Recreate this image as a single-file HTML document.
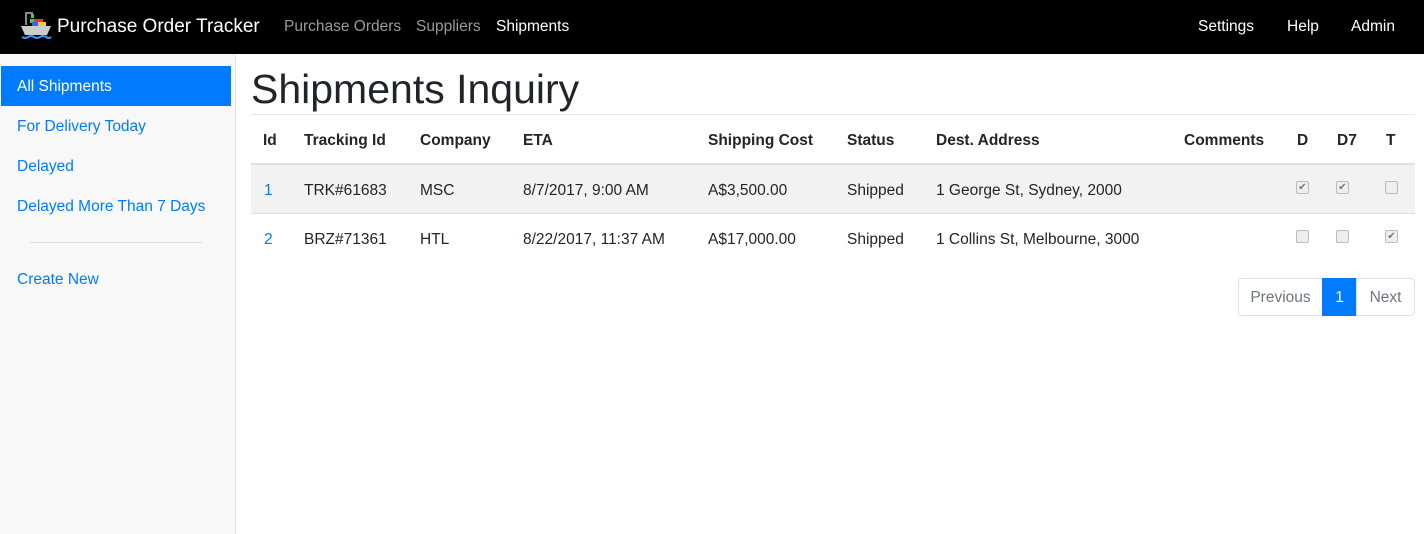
<!DOCTYPE html>
<html><head><meta charset="utf-8"><style>
*{box-sizing:border-box}
body{margin:0;font-family:"Liberation Sans",sans-serif;font-size:15.5px;color:#212529;background:#fff;width:1424px;height:534px;overflow:hidden;position:relative}
.nav{position:absolute;left:0;top:0;width:1424px;height:54px;background:#000;color:#fff}
.nav span{position:absolute;top:18px;font-size:15.5px}
.brand{left:57px;top:16px!important;font-size:19px!important}
.side{position:absolute;left:0;top:54px;width:236px;height:480px;background:#f8f8f8;border-right:1px solid #e5e5e5}
.side a{position:absolute;left:17px;color:#007bff;font-size:15.5px;text-decoration:none}
.active{position:absolute;left:1px;top:12px;width:230px;height:40px;background:#007bff}
h1{position:absolute;left:251px;top:65px;margin:0;font-size:41px;font-weight:500;line-height:48px}
.hr{position:absolute;left:251px;top:114px;width:1164px;height:1px;background:#e5e5e5}
.t{position:absolute;left:251px;width:1164px}
.t span{position:absolute;top:0}
.cb{position:absolute;width:13px;height:13px;border:1px solid #bbb;border-radius:2px;background:#eee;font-size:10px;line-height:11px;text-align:center;color:#777}
.pg{position:absolute;top:278px;height:38px;border:1px solid #dee2e6;color:#6c757d;line-height:38px;text-align:center}
</style></head><body>
<div class="nav">
<svg style="position:absolute;left:20px;top:11px" width="32" height="30" viewBox="0 0 32 30"><rect x="5" y="1" width="2" height="13" fill="#888"/><rect x="5" y="1" width="8" height="2" fill="#888"/><rect x="11" y="3" width="3" height="4" fill="#4c4"/><rect x="10" y="8" width="6" height="4" fill="#4c4"/><rect x="14" y="8" width="9" height="4" fill="#e33"/><rect x="12" y="11" width="6" height="4" fill="#36e"/><rect x="18" y="11" width="8" height="4" fill="#ec4"/><path d="M1 15h30l-4 9H5z" fill="#ccc"/><path d="M2 26q3 2 6 0t6 0t6 0t6 0t5 0" stroke="#39f" fill="none" stroke-width="2"/></svg>
<span class="brand">Purchase Order Tracker</span>
<span style="left:284px;color:#9a9a9a">Purchase Orders</span>
<span style="left:416px;color:#9a9a9a">Suppliers</span>
<span style="left:496px">Shipments</span>
<span style="left:1198px">Settings</span>
<span style="left:1287px">Help</span>
<span style="left:1351px">Admin</span>
</div>
<div class="side">
<div class="active"></div>
<a style="top:24px;color:#fff">All Shipments</a>
<a style="top:64px">For Delivery Today</a>
<a style="top:104px">Delayed</a>
<a style="top:144px">Delayed More Than 7 Days</a>
<div style="position:absolute;left:30px;top:188px;width:172px;height:1px;background:#ddd"></div>
<a style="top:217px">Create New</a>
</div>
<h1>Shipments Inquiry</h1>
<div class="hr"></div>
<div style="position:absolute;left:251px;top:163px;width:1164px;height:2px;background:#dee2e6"></div>
<div style="position:absolute;left:251px;top:165px;width:1164px;height:48px;background:#f2f2f2"></div>
<div style="position:absolute;left:251px;top:213px;width:1164px;height:1px;background:#dee2e6"></div>
<div class="t" style="top:132px;font-weight:bold">
<span style="left:12px">Id</span><span style="left:53px">Tracking Id</span><span style="left:169px">Company</span><span style="left:272px">ETA</span><span style="left:457px">Shipping Cost</span><span style="left:596px">Status</span><span style="left:685px">Dest. Address</span><span style="left:933px">Comments</span><span style="left:1046px">D</span><span style="left:1086px">D7</span><span style="left:1135px">T</span>
</div>
<div class="t" style="top:182px">
<span style="left:13px;color:#007bff">1</span><span style="left:53px">TRK#61683</span><span style="left:169px">MSC</span><span style="left:272px">8/7/2017, 9:00 AM</span><span style="left:457px">A$3,500.00</span><span style="left:596px">Shipped</span><span style="left:685px">1 George St, Sydney, 2000</span>
</div>
<div class="t" style="top:231px">
<span style="left:13px;color:#007bff">2</span><span style="left:53px">BRZ#71361</span><span style="left:169px">HTL</span><span style="left:272px">8/22/2017, 11:37 AM</span><span style="left:457px">A$17,000.00</span><span style="left:596px">Shipped</span><span style="left:685px">1 Collins St, Melbourne, 3000</span>
</div>
<div class="cb" style="left:1296px;top:181px">✔</div><div class="cb" style="left:1336px;top:181px">✔</div><div class="cb" style="left:1385px;top:181px"></div>
<div class="cb" style="left:1296px;top:230px"></div><div class="cb" style="left:1336px;top:230px"></div><div class="cb" style="left:1385px;top:230px">✔</div>
<div class="pg" style="left:1238px;width:85px;border-radius:4px 0 0 4px">Previous</div>
<div class="pg" style="left:1322px;width:35px;background:#007bff;border-color:#007bff;color:#fff">1</div>
<div class="pg" style="left:1356px;width:59px;border-radius:0 4px 4px 0">Next</div>
</body></html>
